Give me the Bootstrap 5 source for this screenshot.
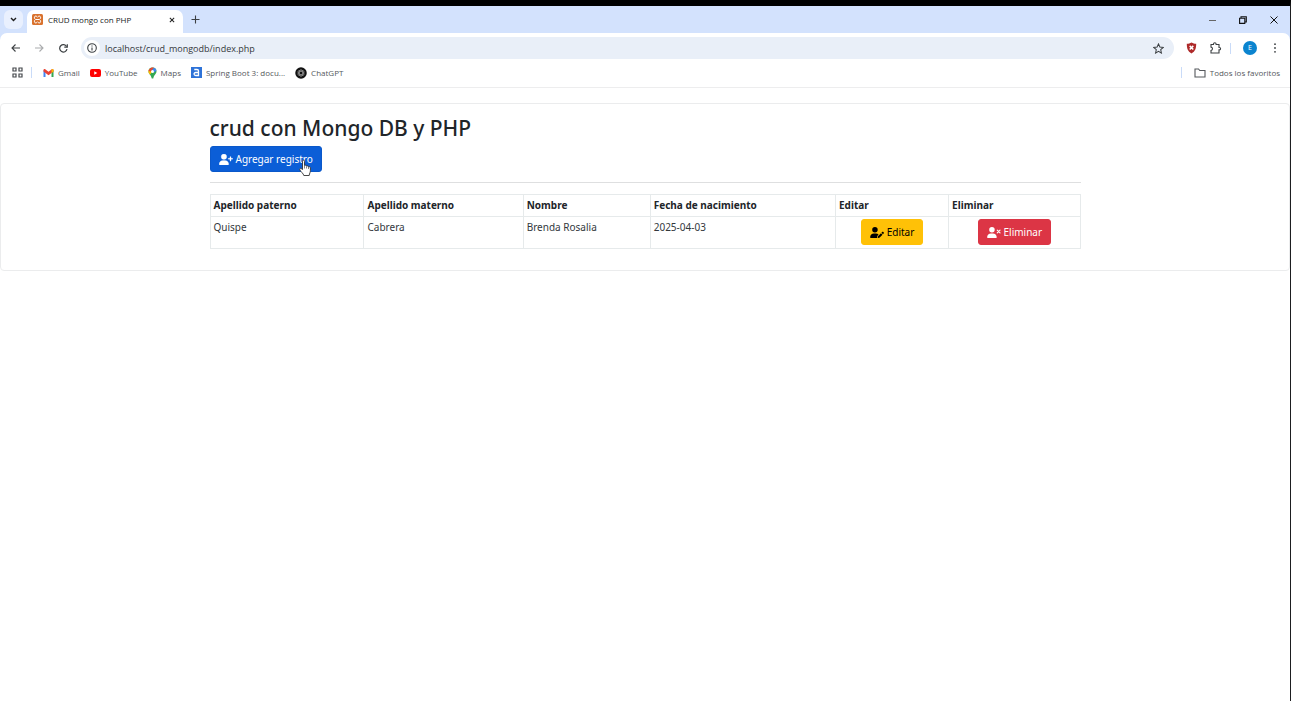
<!DOCTYPE html>
<html lang="es">
<head>
<meta charset="utf-8">
<meta name="viewport" content="width=device-width, initial-scale=1">
<title>CRUD mongo con PHP</title>
<link href="https://cdn.jsdelivr.net/npm/bootstrap@5.3.0/dist/css/bootstrap.min.css" rel="stylesheet">
<style>
  body { font-family: "Noto Sans", "Open Sans", sans-serif; font-size: 10px; line-height: 15px; color: #212529; background: #fff; min-height: 100vh; border-top: 6px solid #000; border-right: 1px solid #1d1e20; }
  svg { display: block; flex: none; }
  button.tool { border: 0; background: none; padding: 0; display: flex; align-items: center; justify-content: center; color: #3c4043; }
  .browser-ui { font-family: "Open Sans", "Noto Sans", sans-serif; font-size: 8px; line-height: 12px; color: #46494d; }
  .tab-strip { background: #d3e2fd; height: 27px; }
  .tab-strip .tab-search { width: 19px; height: 19px; margin: 4px; border-radius: 6px; background: #e9f0fe; color: #1f1f1f; }
  .page-tab { width: 156px; height: 23px; margin-top: 4px; padding: 0 8px 4px 5px; border-radius: 7px 7px 0 0; background: #fff; color: #202124; font-size: 8px; gap: 5px; }
  .window-keys { gap: 21px; padding-right: 11px; }
  .window-keys .tool { width: 10px; color: #111; }
  .toolbar { height: 30px; padding: 0 9px; background: #fff; border-radius: 7px 7px 0 0; }
  .toolbar-wrap { background: #d3e2fd; }
  .nav-keys { gap: 12px; margin-right: 12px; }
  .nav-keys .tool { width: 12px; height: 12px; }
  .address { height: 22px; border-radius: 11px; background: #e9eff8; padding: 0 10px 0 3px; gap: 5px; }
  .address .site-info { width: 16px; height: 16px; border-radius: 50%; background: #fff; }
  .address input { border: 0; background: none; outline: 0; padding: 1px 0 0; color: #35383c; font-size: 9px; }
  .bar-line { width: 1px; height: 11px; background: #c9dbf8; }
  .avatar { width: 14px; height: 14px; border-radius: 50%; background: #0b84cf; color: #fff; font-size: 7px; line-height: 14px; text-align: center; }
  .bookmarks { height: 25px; padding: 0 10px 5px 12px; border-bottom: 1px solid #ededee; }
  .bookmarks a { display: flex; align-items: center; gap: 4px; color: #55585c; text-decoration: none; white-space: nowrap; }
  .bookmark-list { gap: 10px; margin-left: 11px; }
  .crud-card { margin-top: 15px; border-color: #ebeced; border-radius: 4px; }
  .crud-card .card-body { padding: 11px 8px 21px; }
  .crud-container { max-width: 887px; padding: 0 8px; }
  h1 { font-size: 21px; line-height: 27px; font-weight: 500; margin: 0 0 4px; }
  .crud-btn { --bs-btn-font-size: 10px; --bs-btn-padding-x: 8px; --bs-btn-padding-y: 4px; --bs-btn-line-height: 16px; --bs-btn-border-radius: 3px; display: inline-flex; align-items: center; gap: 3px; white-space: nowrap; vertical-align: top; }
  .add-btn { --bs-btn-bg: #0b5ed7; --bs-btn-border-color: #0a58ca; position: relative; }
  .hand { position: absolute; right: 10px; bottom: -6px; }
  .crud-rule { margin: 10px 0 11px; color: #7c8084; }
  .crud-table { border-color: #e6eaeb; table-layout: fixed; margin: 0; }
  .crud-table > :not(caption) > * > * { padding: 3px; color: #212529; }
  .crud-table > tbody > tr > td { color: #33383d; }
  .crud-table > tbody > tr > .action-cell { padding: 2px 3px 3px; }
</style>
</head>
<body>
<header class="browser-ui">
  <div class="tab-strip d-flex">
    <button class="tool tab-search" aria-label="Buscar pestañas"><svg width="7" height="5" viewBox="0 0 7 5" fill="none" stroke="currentColor" stroke-width="1.4"><path d="M1 1l2.500 2.500L6 1"/></svg></button>
    <div class="page-tab d-flex align-items-center">
      <svg width="11" height="11" viewBox="0 0 22 22"><rect width="22" height="22" rx="3" fill="#d9722e"/><path d="M6 4.500C4 6.500 4.500 9 7 11c-2.500 2-3 4.500-1 6.500 2 1 3.500 0 5-2 1.500 2 3 3 5 2 2-2 1.500-4.500-1-6.500 2.500-2 3-4.500 1-6.500-2-1-3.500 0-5 2-1.500-2-3-3-5-2zM8 11h6" fill="none" stroke="#fff" stroke-width="2"/></svg>
      <span class="flex-grow-1">CRUD mongo con PHP</span>
      <button class="tool" aria-label="Cerrar pestaña"><svg width="6" height="6" viewBox="0 0 7 7" stroke="#222" stroke-width="1.2"><path d="M1 1l5 5M6 1L1 6"/></svg></button>
    </div>
    <button class="tool ms-2" aria-label="Nueva pestaña"><svg width="9" height="9" viewBox="0 0 9 9" stroke="currentColor" stroke-width="1.100"><path d="M4.500 .5v8M.5 4.500h8"/></svg></button>
    <div class="window-keys d-flex ms-auto">
      <button class="tool" aria-label="Minimizar"><svg width="8" height="8" viewBox="0 0 8 8" stroke="#666"><path d="M1 4.500h7"/></svg></button>
      <button class="tool" aria-label="Restaurar"><svg width="8" height="8" viewBox="0 0 8 8" fill="none" stroke="currentColor" stroke-width="1.100"><path d="M.6 2.200h5.200v5.200H.6zM2 2V.7h5.300V6H6"/></svg></button>
      <button class="tool" aria-label="Cerrar"><svg width="8" height="8" viewBox="0 0 8 8" stroke="currentColor"><path d="M.5.5l7 7M7.500.5l-7 7"/></svg></button>
    </div>
  </div>
  <div class="toolbar-wrap">
    <div class="toolbar d-flex align-items-center">
      <div class="nav-keys d-flex">
        <button class="tool" aria-label="Atrás"><svg width="9" height="8" viewBox="0 0 9 8" fill="none" stroke="currentColor" stroke-width="1.100"><path d="M9 4H1M4.500.5L1 4l3.500 3.500"/></svg></button>
        <button class="tool" aria-label="Adelante"><svg width="9" height="8" viewBox="0 0 9 8" fill="none" stroke="#aaacae" stroke-width="1.100"><path d="M0 4h8M4.500.5L8 4 4.500 7.500"/></svg></button>
        <button class="tool" aria-label="Recargar"><svg width="9" height="9" viewBox="0 0 9 9" fill="none" stroke="currentColor" stroke-width="1.200"><path d="M8 5.200A3.700 3.700 0 1 1 7.600 2.500"/><path d="M5.300 3.200h3V.3"/></svg></button>
      </div>
      <div class="address d-flex align-items-center flex-grow-1">
        <button class="tool site-info" aria-label="Información del sitio"><svg width="10" height="10" viewBox="0 0 10 10" fill="none" stroke="#3c4043" stroke-width="1.100"><circle cx="5" cy="5" r="4.300"/><path d="M5 4.500v3M5 2.400v1.200"/></svg></button>
        <input class="flex-grow-1" type="text" aria-label="Dirección" value="localhost/crud_mongodb/index.php">
        <button class="tool" aria-label="Añadir a favoritos"><svg width="11" height="11" viewBox="0 0 12 12" fill="none" stroke="currentColor" stroke-width="1.100"><path d="M6 1l1.500 3.400 3.700.4-2.800 2.500.8 3.700L6 9.100 2.800 11l.8-3.700L.8 4.800l3.700-.4z"/></svg></button>
      </div>
      <button class="tool ms-2 ps-1" aria-label="Extensión de bloqueo"><svg width="11" height="12" viewBox="0 0 11 12"><path d="M5.500.5c1.500 1 3 1.300 4.700 1.300 0 4.500-.8 7.500-4.700 9.700C1.600 9.300.8 6.300.8 1.800 2.500 1.800 4 1.500 5.500.5z" fill="#ae2a2a"/><path d="M3.700 3.900l3.600 3.600M7.300 3.900L3.700 7.500" stroke="#fff" stroke-width="1.500"/></svg></button>
      <button class="tool ms-2 ps-1" aria-label="Extensiones"><svg width="13" height="12" viewBox="0 0 13 12" fill="none" stroke="currentColor" stroke-width="1.100"><path d="M2 2.500h2.500V2a1.300 1.300 0 0 1 2.600 0v.5H10v3h.4a1.200 1.200 0 0 1 0 2.400H10V11H2V8.500c2-.2 2-3.200 0-3.400z"/></svg></button>
      <span class="bar-line ms-2 ps-0 me-2"></span>
      <button class="tool ms-1 me-1" aria-label="Perfil"><span class="avatar">E</span></button>
      <button class="tool ms-2 ps-1 me-1" aria-label="Menú"><svg width="4" height="10" viewBox="0 0 4 10" fill="currentColor"><circle cx="2" cy="1.200" r=".9"/><circle cx="2" cy="5" r=".9"/><circle cx="2" cy="8.800" r=".9"/></svg></button>
    </div>
  </div>
  <nav class="bookmarks d-flex align-items-center" aria-label="Favoritos">
    <button class="tool" aria-label="Aplicaciones"><svg width="11" height="11" viewBox="0 0 11 11" fill="none" stroke="#45484c" stroke-width="1.200"><path d="M1 1h3v3H1zM7 1h3v3H7zM1 7h3v3H1zM7 7h3v3H7z"/></svg></button>
    <span class="bar-line ms-2"></span>
    <div class="bookmark-list d-flex">
      <a href="#"><svg width="11" height="8" viewBox="0 0 22 16"><path d="M1 2v14h4V6z" fill="#4285f4"/><path d="M17 6v10h4V2z" fill="#34a853"/><path d="M1 5V2c0-2 2-2.500 3.500-1.300L11 5.500 17.500.7C19 -.5 21 0 21 2v3l-10 7.500z" fill="#ea4335"/><path d="M17 1.200C19-.5 21 0 21 2v3l-4 3z" fill="#fbbc04"/></svg>Gmail</a>
      <a href="#"><svg width="11" height="8" viewBox="0 0 22 16"><rect width="22" height="16" rx="4" fill="#f00"/><path d="M8.500 4.500v7l6-3.500z" fill="#fff"/></svg>YouTube</a>
      <a href="#"><svg width="9" height="12" viewBox="0 0 18 24"><path d="M9 1a8 8 0 0 1 8 8c0 5-5 6-6.500 14h-3C6 15 1 14 1 9a8 8 0 0 1 8-8z" fill="#34a853"/><path d="M3 4l6 5-5 6C-1 10 1 6 3 4z" fill="#fbbc04"/><path d="M3 4c2-3 6-4 9-2.500L5.500 9 1 8z" fill="#ea4335"/><path d="M12 1.500c2 .8 4 2.500 5 5.500l-5 4-4-5z" fill="#4285f4"/><circle cx="9" cy="9" r="3" fill="#fff"/></svg>Maps</a>
      <a href="#"><svg width="11" height="11" viewBox="0 0 22 22"><path d="M0 0h22v22H0z" fill="#2e73d8"/><path d="M6.500 5h5.500c2 0 3 1 3 3v9H9.500c-4.500 0-4.500-6 0-6H15" fill="none" stroke="#fff" stroke-width="2.600"/></svg>Spring Boot 3: docu...</a>
      <a href="#"><svg width="12" height="12" viewBox="0 0 24 24" fill="none"><circle cx="12" cy="12" r="11.500" fill="#111"/><g stroke="#aaa" stroke-width="1.200"><ellipse cx="12" cy="12" rx="3.500" ry="7"/><ellipse cx="12" cy="12" rx="3.500" ry="7" transform="rotate(60 12 12)"/><ellipse cx="12" cy="12" rx="3.500" ry="7" transform="rotate(120 12 12)"/></g></svg>ChatGPT</a>
    </div>
    <span class="bar-line ms-auto me-2"></span>
    <a class="ms-1" href="#"><svg width="12" height="10" viewBox="0 0 12 10" fill="none" stroke="currentColor" stroke-width="1.100"><path d="M1 1h3.500l1.300 1.500H11V9H1z"/></svg>Todos los favoritos</a>
  </nav>
</header>

<main class="card crud-card">
  <div class="card-body">
    <div class="container crud-container">
      <h1>crud con Mongo DB y PHP</h1>
      <button class="btn btn-primary crud-btn add-btn" type="button">
        <svg width="14" height="11" viewBox="0 0 640 512" fill="currentColor"><path d="M96 128a128 128 0 1 1 256 0A128 128 0 1 1 96 128zM0 482.300C0 383.800 79.800 304 178.300 304h91.400C368.200 304 448 383.800 448 482.300c0 16.400-13.300 29.700-29.700 29.700H29.700C13.300 512 0 498.700 0 482.300zM504 312V248H440c-13.300 0-24-10.700-24-24s10.700-24 24-24h64V136c0-13.300 10.700-24 24-24s24 10.700 24 24v64h64c13.300 0 24 10.700 24 24s-10.700 24-24 24H552v64c0 13.300-10.700 24-24 24s-24-10.700-24-24z" stroke="currentColor" stroke-width="12"/></svg>
        Agregar registro
        <svg class="hand" width="12" height="18" viewBox="0 0 12 17"><path d="M3.500 10V1.800c0-1.600 2-1.600 2 0V6c1-.6 2-.3 2 .6 1-.5 1.900-.1 2 .8 1-.4 1.900 0 1.900 1V11c0 2-.9 2.700-1.200 5H4.800C4.500 14 1.800 12.500.8 10.300c-.5-1.200.7-1.900 1.600-1.100z" fill="#fff" stroke="#333" stroke-width=".9"/><path d="M5.500 6v3M7.500 7v2M9.500 7.500v2" stroke="#555" stroke-width=".7"/></svg>
      </button>
      <hr class="crud-rule">
      <table class="table table-sm table-bordered crud-table">
        <colgroup><col style="width:17.7%"><col style="width:18.3%"><col style="width:14.6%"><col style="width:21.3%"><col style="width:13%"><col style="width:15.1%"></colgroup>
        <thead>
          <tr><th scope="col">Apellido paterno</th><th scope="col">Apellido materno</th><th scope="col">Nombre</th><th scope="col">Fecha de nacimiento</th><th scope="col">Editar</th><th scope="col">Eliminar</th></tr>
        </thead>
        <tbody>
          <tr>
            <td>Quispe</td><td>Cabrera</td><td>Brenda Rosalia</td><td>2025-04-03</td>
            <td class="text-center action-cell"><button class="btn btn-warning crud-btn" type="button"><svg width="14" height="11" viewBox="0 0 640 512" fill="currentColor"><path d="M224 256A128 128 0 1 0 224 0a128 128 0 1 0 0 256zm-45.700 48C79.800 304 0 383.800 0 482.300C0 498.700 13.300 512 29.700 512H322.800c-3.100-8.800-3.700-18.400-1.400-27.800l15-60.100c2.800-11.300 8.600-21.500 16.800-29.700l40.300-40.300c-32.100-31-75.700-50.100-123.900-50.100H178.300zm435.500-68.300c-15.600-15.600-40.900-15.600-56.600 0l-29.400 29.400 71 71 29.400-29.400c15.600-15.600 15.600-40.900 0-56.600l-14.400-14.400zM375.900 417c-4.100 4.100-7 9.200-8.400 14.900l-15 60.100c-1.400 5.500 .2 11.200 4.200 15.200s9.700 5.600 15.200 4.200l60.100-15c5.600-1.400 10.800-4.300 14.900-8.400L576.100 358.700l-71-71L375.900 417z"/></svg>Editar</button></td>
            <td class="text-center action-cell"><button class="btn btn-danger crud-btn" type="button"><svg width="14" height="11" viewBox="0 0 640 512" fill="currentColor"><path d="M96 128a128 128 0 1 1 256 0A128 128 0 1 1 96 128zM0 482.300C0 383.800 79.800 304 178.300 304h91.400C368.200 304 448 383.800 448 482.300c0 16.400-13.300 29.700-29.700 29.700H29.700C13.300 512 0 498.700 0 482.300z"/><path d="M472 144l128 128M600 144L472 272" stroke="currentColor" stroke-width="56" stroke-linecap="round"/></svg>Eliminar</button></td>
          </tr>
        </tbody>
      </table>
    </div>
  </div>
</main>
<script src="https://cdn.jsdelivr.net/npm/bootstrap@5.3.0/dist/js/bootstrap.bundle.min.js"></script>
</body>
</html>
